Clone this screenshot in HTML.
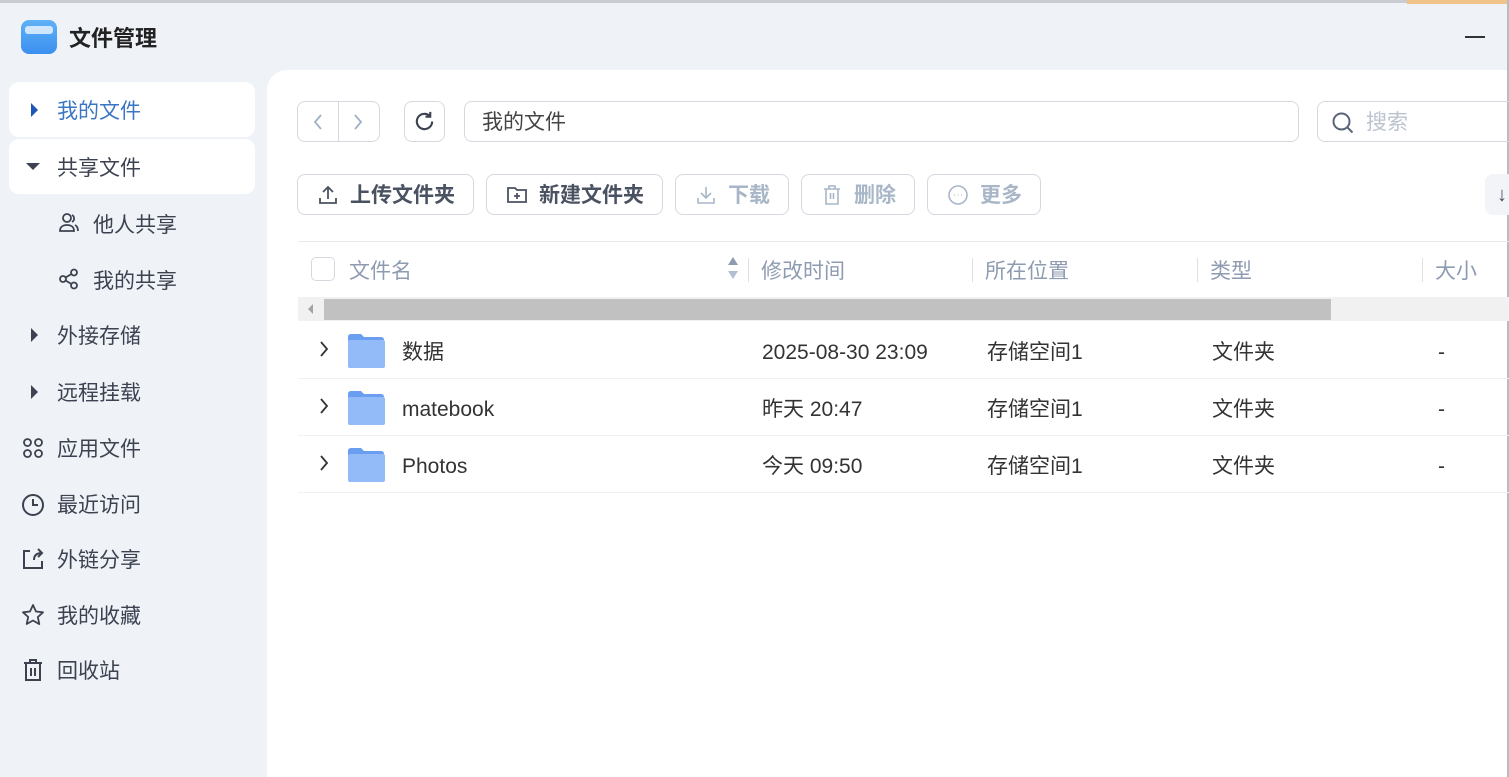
<!DOCTYPE html>
<html><head><meta charset="utf-8"><style>
*{box-sizing:border-box;margin:0;padding:0}
body{width:1509px;height:777px;overflow:hidden;background:#eff3f8;font-family:"Liberation Sans","Noto Sans CJK SC",sans-serif;position:relative;color:#333;line-height:30px}
.a{position:absolute}
.side{font-size:21px;color:#3c4250}
.nav{position:absolute;left:0;width:255px;height:44px}
.tri-r{position:absolute;left:31px;width:0;height:0;border-top:7px solid transparent;border-bottom:7px solid transparent;border-left:7px solid #3c4250}
.btn{position:absolute;top:174px;height:41px;border:1px solid #d5d9df;border-radius:8px;background:#fff;display:flex;align-items:center;font-size:21px;font-weight:bold;color:#4a5262;padding-top:3px}
.btn.dis{color:#a8b6c8}
.btn svg{margin:-3px 12px 0 20px}
.hd{position:absolute;top:257px;font-size:21px;color:#8e9bb0}
.sep{position:absolute;top:258px;width:1px;height:24px;background:#dde1e6}
.row{position:absolute;left:298px;width:1211px;height:57px;border-bottom:1px solid #eef0f3;font-size:21px;color:#333}
.row span{position:absolute;top:16px;line-height:30px}
.fold{position:absolute;left:49px;top:11px;width:38px;height:35px}
</style></head><body>
<div class="a" style="left:0;top:0;width:1509px;height:3px;background:#c9ccd1"></div>
<div class="a" style="left:1407px;top:0;width:102px;height:4px;background:#f0c38a"></div>
<div class="a" style="left:21px;top:20px;width:36px;height:34px;border-radius:8px;background:linear-gradient(#5fb2f6,#3b8ff0)"></div>
<div class="a" style="left:25px;top:26px;width:28px;height:8px;border-radius:3px;background:#cfe7fd"></div>
<div class="a" style="left:69px;top:24px;font-size:22px;font-weight:bold;color:#222">文件管理</div>
<div class="a" style="left:1465px;top:36px;width:20px;height:2px;background:#333"></div>
<div class="side">
<div class="nav" style="left:9px;width:246px;top:82px;height:55px;background:#fff;border-radius:10px"></div>
<div class="nav" style="left:9px;width:246px;top:139px;height:55px;background:#fff;border-radius:10px"></div>
<div class="tri-r" style="top:103px;border-left-color:#1e56b8"></div>
<div class="a" style="left:57px;top:97px;color:#3a76c4">我的文件</div>
<div class="a" style="left:26px;top:163px;width:0;height:0;border-left:7px solid transparent;border-right:7px solid transparent;border-top:7px solid #3c4250"></div>
<div class="a" style="left:57px;top:154px">共享文件</div>
<svg class="a" style="left:58px;top:212px" width="22" height="22" viewBox="0 0 22 22" fill="none" stroke="#3c4250" stroke-width="1.8"><circle cx="9" cy="6" r="4"/><path d="M2 19c0-4 3-6 7-6s7 2 7 6zM14 3a4 4 0 0 1 0 7M17 13c2 1 3 3 3 6"/></svg>
<div class="a" style="left:93px;top:211px">他人共享</div>
<svg class="a" style="left:58px;top:268px" width="22" height="22" viewBox="0 0 22 22" fill="none" stroke="#3c4250" stroke-width="1.8"><circle cx="16" cy="4.5" r="3"/><circle cx="5" cy="11" r="3"/><circle cx="16" cy="17.5" r="3"/><path d="M7.6 9.5l5.8-3.5M7.6 12.5l5.8 3.5"/></svg>
<div class="a" style="left:93px;top:267px">我的共享</div>
<div class="tri-r" style="top:328px"></div>
<div class="a" style="left:57px;top:322px">外接存储</div>
<div class="tri-r" style="top:385px"></div>
<div class="a" style="left:57px;top:379px">远程挂载</div>
<svg class="a" style="left:22px;top:437px" width="22" height="22" viewBox="0 0 22 22" fill="none" stroke="#3c4250" stroke-width="1.8"><circle cx="5.5" cy="5.5" r="3.5"/><circle cx="16.5" cy="5.5" r="3.5"/><circle cx="5.5" cy="16.5" r="3.5"/><circle cx="16.5" cy="16.5" r="3.5"/></svg>
<div class="a" style="left:57px;top:435px">应用文件</div>
<svg class="a" style="left:21px;top:493px" width="24" height="24" viewBox="0 0 24 24" fill="none" stroke="#3c4250" stroke-width="2"><circle cx="12" cy="12" r="10"/><path d="M12 6v6h5"/></svg>
<div class="a" style="left:57px;top:491px">最近访问</div>
<svg class="a" style="left:22px;top:548px" width="22" height="22" viewBox="0 0 22 22" fill="none" stroke="#3c4250" stroke-width="2"><path d="M8 3H2v17h18v-7M12 12c0-5 3-7 8-7M16 1l4 4-4 4"/></svg>
<div class="a" style="left:57px;top:546px">外链分享</div>
<svg class="a" style="left:21px;top:603px" width="24" height="24" viewBox="0 0 24 24" fill="none" stroke="#3c4250" stroke-width="1.8" stroke-linejoin="round"><path d="M12 2l3 6.5 7 .8-5.2 4.8 1.5 7L12 17.5 5.7 21l1.5-7L2 9.3l7-.8z"/></svg>
<div class="a" style="left:57px;top:602px">我的收藏</div>
<svg class="a" style="left:22px;top:658px" width="22" height="24" viewBox="0 0 22 24" fill="none" stroke="#3c4250" stroke-width="2"><path d="M2 5h18M8 5V2h6v3M4 5v17h14V5M9 10v8M13 10v8"/></svg>
<div class="a" style="left:57px;top:657px">回收站</div>
</div>
<div class="a" style="left:267px;top:70px;width:1242px;height:707px;background:#fff;border-top-left-radius:20px"></div>
<div class="a" style="left:1507px;top:0;width:2px;height:777px;background:#b8bbc0"></div>
<div class="a" style="left:297px;top:101px;width:83px;height:41px;border:1px solid #d5d9df;border-radius:8px"></div>
<div class="a" style="left:338px;top:102px;width:1px;height:39px;background:#d5d9df"></div>
<svg class="a" style="left:312px;top:113px" width="12" height="18" viewBox="0 0 12 18" fill="none" stroke="#9fb0c8" stroke-width="1.8"><path d="M9 2L3 9l6 7"/></svg>
<svg class="a" style="left:352px;top:113px" width="12" height="18" viewBox="0 0 12 18" fill="none" stroke="#9fb0c8" stroke-width="1.8"><path d="M3 2l6 7-6 7"/></svg>
<div class="a" style="left:404px;top:101px;width:41px;height:41px;border:1px solid #d5d9df;border-radius:8px"></div>
<svg class="a" style="left:413px;top:110px" width="23" height="23" viewBox="0 0 24 24" fill="none" stroke="#3c4250" stroke-width="2.2"><path d="M20 12a8 8 0 1 1-3-6.3M18 2v5h-5"/></svg>
<div class="a" style="left:464px;top:101px;width:835px;height:41px;border:1px solid #d5d9df;border-radius:8px;font-size:21px;color:#444;padding:6px 0 0 17px">我的文件</div>
<div class="a" style="left:1317px;top:101px;width:200px;height:41px;border:1px solid #d5d9df;border-radius:8px;font-size:21px;color:#bcc3cf;padding:6px 0 0 48px">搜索</div>
<svg class="a" style="left:1331px;top:111px" width="24" height="24" viewBox="0 0 24 24" fill="none" stroke="#5a6478" stroke-width="2"><circle cx="10.5" cy="10.5" r="8"/><path d="M16.5 16.5l5 5"/></svg>
<div class="btn" style="left:297px;width:177px"><svg width="20" height="20" viewBox="0 0 20 20" fill="none" stroke="#4a5262" stroke-width="1.8"><path d="M10 14V2M5 7l5-5 5 5M2 13v5h16v-5"/></svg>上传文件夹</div>
<div class="btn" style="left:486px;width:177px"><svg width="20" height="20" viewBox="0 0 20 20" fill="none" stroke="#4a5262" stroke-width="1.8"><path d="M1 3h7l2 2h9v12H1zM10 8v6M7 11h6"/></svg>新建文件夹</div>
<div class="btn dis" style="left:675px;width:114px"><svg width="20" height="20" viewBox="0 0 20 20" fill="none" stroke="#a8b6c8" stroke-width="1.6"><path d="M10 2v11M5 8l5 5 5-5M2 13v5h16v-5"/></svg>下载</div>
<div class="btn dis" style="left:801px;width:114px"><svg width="20" height="20" viewBox="0 0 20 20" fill="none" stroke="#a8b6c8" stroke-width="1.6"><path d="M2 4h16M7 4V1h6v3M4 4v15h12V4M8.5 8v6M11.5 8v6"/></svg>删除</div>
<div class="btn dis" style="left:927px;width:114px"><svg width="20" height="20" viewBox="0 0 20 20" fill="none" stroke="#a8b6c8" stroke-width="1.6"><circle cx="10" cy="10" r="9"/><path d="M6 10h.5M9.8 10h.5M13.5 10h.5" stroke-width="2"/></svg>更多</div>
<div class="a" style="left:1485px;top:174px;width:30px;height:41px;background:#f2f4f7;border-radius:8px;font-size:20px;color:#4a5262;padding:6px 0 0 12px">↓</div>
<div class="a" style="left:298px;top:241px;width:1211px;height:1px;background:#e6e9ee"></div>
<div class="a" style="left:311px;top:257px;width:24px;height:24px;border:1px solid #d5d9df;border-radius:5px"></div>
<div class="hd" style="left:349px">文件名</div>
<div class="a" style="left:728px;top:257px;width:0;height:0;border-left:5px solid transparent;border-right:5px solid transparent;border-bottom:8px solid #8e9bb0"></div>
<div class="a" style="left:728px;top:271px;width:0;height:0;border-left:5px solid transparent;border-right:5px solid transparent;border-top:8px solid #b4c0d2"></div>
<div class="sep" style="left:748px"></div>
<div class="hd" style="left:761px">修改时间</div>
<div class="sep" style="left:972px"></div>
<div class="hd" style="left:985px">所在位置</div>
<div class="sep" style="left:1197px"></div>
<div class="hd" style="left:1210px">类型</div>
<div class="sep" style="left:1422px"></div>
<div class="hd" style="left:1435px">大小</div>
<div class="a" style="left:298px;top:297px;width:1211px;height:24px;background:#f1f1f1"></div>
<div class="a" style="left:324px;top:299px;width:1007px;height:21px;background:#c1c1c1"></div>
<div class="a" style="left:308px;top:304px;width:0;height:0;border-top:5px solid transparent;border-bottom:5px solid transparent;border-right:5px solid #a3a3a3"></div>
<div class="row" style="top:322px">
<svg class="a" style="left:20px;top:18px" width="12" height="18" viewBox="0 0 12 18" fill="none" stroke="#333" stroke-width="1.8"><path d="M3 2l6 7-6 7"/></svg>
<svg class="fold" viewBox="0 0 38 35"><path d="M1 4q0-3 3-3h10l3 3h17q3 0 3 3v25q0 3-3 3H4q-3 0-3-3z" fill="#6a9ef0"/><rect x="1" y="7" width="37" height="28" rx="2" fill="#93bbf8"/></svg>
<span style="left:104px">数据</span><span style="left:464px">2025-08-30 23:09</span><span style="left:689px">存储空间1</span><span style="left:914px">文件夹</span><span style="left:1140px">-</span></div>
<div class="row" style="top:379px">
<svg class="a" style="left:20px;top:18px" width="12" height="18" viewBox="0 0 12 18" fill="none" stroke="#333" stroke-width="1.8"><path d="M3 2l6 7-6 7"/></svg>
<svg class="fold" viewBox="0 0 38 35"><path d="M1 4q0-3 3-3h10l3 3h17q3 0 3 3v25q0 3-3 3H4q-3 0-3-3z" fill="#6a9ef0"/><rect x="1" y="7" width="37" height="28" rx="2" fill="#93bbf8"/></svg>
<span style="left:104px">matebook</span><span style="left:464px">昨天 20:47</span><span style="left:689px">存储空间1</span><span style="left:914px">文件夹</span><span style="left:1140px">-</span></div>
<div class="row" style="top:436px">
<svg class="a" style="left:20px;top:18px" width="12" height="18" viewBox="0 0 12 18" fill="none" stroke="#333" stroke-width="1.8"><path d="M3 2l6 7-6 7"/></svg>
<svg class="fold" viewBox="0 0 38 35"><path d="M1 4q0-3 3-3h10l3 3h17q3 0 3 3v25q0 3-3 3H4q-3 0-3-3z" fill="#6a9ef0"/><rect x="1" y="7" width="37" height="28" rx="2" fill="#93bbf8"/></svg>
<span style="left:104px">Photos</span><span style="left:464px">今天 09:50</span><span style="left:689px">存储空间1</span><span style="left:914px">文件夹</span><span style="left:1140px">-</span></div>
</body></html>
